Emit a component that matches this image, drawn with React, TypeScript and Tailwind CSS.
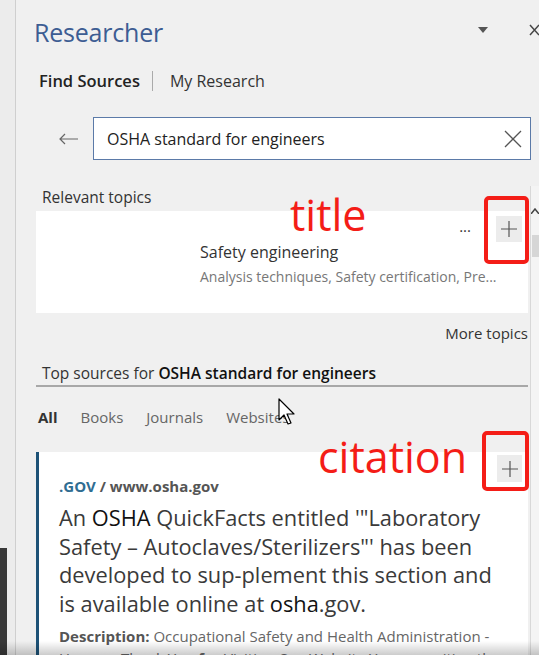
import React from "react";

const font = { fontFamily: '"Open Sans", "Noto Sans", sans-serif' };

function Cursor() {
  return (
    <svg width="18" height="28" viewBox="0 0 18 28" className="absolute left-[278px] top-[398px]">
      <path d="M1 1 L1 22 L6 17 L10 26 L13 25 L9 16 L16 16 Z" fill="#ffffff" stroke="#000000" strokeWidth="1.2" strokeLinejoin="round" />
    </svg>
  );
}

function PlusButton({ w, h }: { w: string; h: string }) {
  return (
    <div className={`${w} ${h} bg-[#ececec] flex items-center justify-center shrink-0`}>
      <svg width="16" height="16" viewBox="0 0 16 16">
        <path d="M8 0 L8 16 M0 8 L16 8" stroke="#555" strokeWidth="1.2" />
      </svg>
    </div>
  );
}

export default function App() {
  return (
    <div className="relative w-[539px] h-[655px] overflow-hidden bg-[#f0f0f0] flex text-[#333]" style={font}>
      {/* left strip */}
      <div className="w-[16px] shrink-0 border-r border-[#cfcfcf] bg-[#ececec] flex flex-col justify-end">
        <div className="w-[7px] h-[107px] bg-[#383838]" />
      </div>

      {/* panel */}
      <div className="flex-1 flex flex-col min-w-0">
        {/* header */}
        <div className="flex items-center h-[50px] pt-[14px] pl-[18px] shrink-0">
          <div className="text-[25px] leading-[30px] text-[#3d5d93] tracking-[-0.2px]">Researcher</div>
          <div className="flex-1" />
          <svg width="10" height="6" viewBox="0 0 10 6" className="mr-[41px] mt-[-4px]">
            <path d="M0 0 L10 0 L5 6 Z" fill="#555" />
          </svg>
          <svg width="10" height="12" viewBox="0 0 10 12" className="mt-[-4px]">
            <path d="M1 1 L10 11 M10 1 L1 11" stroke="#444" strokeWidth="1.5" />
          </svg>
        </div>

        <div className="flex items-center h-[22px] mt-[20px] pl-[23px] shrink-0">
          <span className="text-[16.5px] font-semibold text-[#222]">Find Sources</span>
          <span className="ml-[12px] mr-[17px] w-px h-[20px] bg-[#aaa]" />
          <span className="text-[16px] text-[#333]">My Research</span>
        </div>

        {/* search */}
        <div className="flex items-center mt-[25px] h-[43px] pl-[43px] pr-[8px] shrink-0">
          <svg width="20" height="12" viewBox="0 0 20 12" className="mr-[14px]">
            <path d="M19 6 L1 6 M6 1 L1 6 L6 11" stroke="#666" strokeWidth="1.2" fill="none" />
          </svg>
          <div className="flex-1 h-[43px] bg-white border border-[#5b7aa8] flex items-center pl-[13px] pr-[8px]">
            <span className="flex-1 text-[16px] text-[#222]">OSHA standard for engineers</span>
            <svg width="18" height="18" viewBox="0 0 18 18">
              <path d="M1 1 L17 17 M17 1 L1 17" stroke="#555" strokeWidth="1.3" />
            </svg>
          </div>
        </div>

        {/* scroll area */}
        <div className="flex-1 flex mt-[26px] min-h-0">
          <div className="flex-1 flex flex-col pl-[20px] pr-[2px] min-w-0">
            <div className="h-[22px] leading-[22px] text-[15.5px] text-[#333] pl-[6px] shrink-0">Relevant topics</div>

            <div className="mt-[3px] h-[102px] bg-white flex flex-col shrink-0">
              <div className="flex justify-end items-center pt-[5px] pr-[6px]">
                <span className="text-[15px] leading-[15px] text-[#333] mr-[25px] mt-[-6px]">...</span>
                <PlusButton w="w-[26px]" h="h-[26px]" />
              </div>
              <div className="pl-[164px] text-[16px] leading-[20px] text-[#333]">Safety engineering</div>
              <div className="pl-[164px] mt-[5px] text-[14px] leading-[20px] text-[#777] whitespace-nowrap">Analysis techniques, Safety certification, Pre...</div>
            </div>

            <div className="flex justify-end mt-[10px] h-[20px] leading-[20px] text-[15px] text-[#333] shrink-0">More topics</div>

            <div className="mt-[20px] pl-[6px] h-[20px] leading-[20px] text-[15.5px] text-[#333] whitespace-nowrap shrink-0">
              Top sources for <span className="font-semibold text-[#111]">OSHA standard for engineers</span>
            </div>
            <div className="mt-[2px] h-[2px] bg-[#a8a8a8] shrink-0" />

            <div className="flex items-center gap-[23px] mt-[20px] pl-[2px] h-[20px] text-[15px] text-[#666] shrink-0">
              <span className="font-bold text-[#333]">All</span>
              <span>Books</span>
              <span>Journals</span>
              <span>Websites</span>
            </div>

            {/* citation card */}
            <div className="mt-[25px] flex-1 bg-white border-l-[3px] border-[#1d5277] flex flex-col">
              <div className="flex justify-between items-start pl-[20px] pr-[6px]">
                <div className="mt-[26px] text-[15px] leading-[16px] font-bold text-[#555]">
                  <span className="text-[#2f6d92]">.GOV</span> / www.osha.gov
                </div>
                <div className="mt-[3px]">
                  <PlusButton w="w-[25px]" h="h-[27px]" />
                </div>
              </div>
              <div className="pl-[20px] mt-[10px] text-[21.8px] leading-[28.5px] text-[#3a3a3a] whitespace-nowrap">
                An <span className="text-[#111]">OSHA</span> QuickFacts entitled '"Laboratory<br />
                Safety – Autoclaves/Sterilizers"' has been<br />
                developed to sup-plement this section and<br />
                is available online at <span className="text-[#111]">osha</span>.gov.
              </div>
              <div className="pl-[20px] mt-[7px] text-[15px] leading-[22px] text-[#666] whitespace-nowrap">
                <span className="font-bold text-[#555]">Description:</span> Occupational Safety and Health Administration -<br />
                Home ... Thank You <span className="font-bold">for</span> Visiting Our Website You are exiting the
              </div>
            </div>
          </div>

          {/* scrollbar */}
          <div className="w-[9px] shrink-0 border-l border-[#d8d8d8] bg-[#f4f4f4] flex flex-col items-center pt-[22px]">
            <svg width="8" height="6" viewBox="0 0 8 6">
              <path d="M0 6 L4 1 L8 6" stroke="#444" strokeWidth="1.5" fill="none" />
            </svg>
            <div className="mt-[21px] w-[7px] h-[22px] bg-[#d6d6d6]" />
          </div>
        </div>
      </div>

      {/* annotations */}
      <div className="absolute left-[484px] top-[196px] w-[45px] h-[68px] border-[4px] border-[#f41d17] rounded-[5px]" />
      <div className="absolute left-[290px] top-[191px] text-[43px] leading-[48px] text-[#f41d17]">title</div>
      <div className="absolute left-[482px] top-[431px] w-[47px] h-[60px] border-[4px] border-[#f41d17] rounded-[5px]" />
      <div className="absolute left-[318px] top-[433px] text-[43px] leading-[48px] text-[#f41d17]">citation</div>

      <Cursor />

      {/* video shadow at bottom */}
      <div className="absolute left-0 right-0 bottom-0 h-[14px] bg-gradient-to-b from-transparent to-[rgba(0,0,0,0.2)]" />
    </div>
  );
}
